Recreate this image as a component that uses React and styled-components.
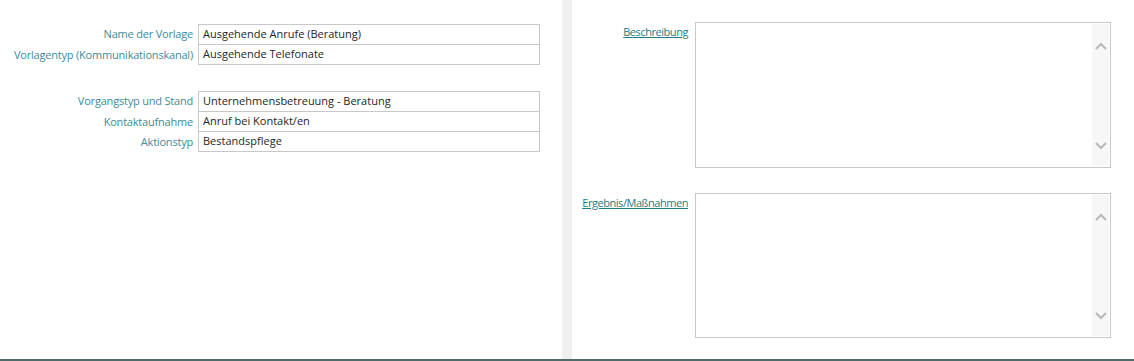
import React from "react";
import styled, { createGlobalStyle } from "styled-components";

const Global = createGlobalStyle`
  html, body { margin: 0; padding: 0; background: #fff; }
  body { font-family: "Segoe UI", "Open Sans", "Noto Sans", sans-serif; }
`;

const Page = styled.div`
  width: 1134px;
  height: 361px;
  box-sizing: border-box;
  border-bottom: 2px solid #4f6b6a;
  display: grid;
  grid-template-columns: 562px 10px 1fr;
`;

const LeftPanel = styled.div`
  padding-top: 24px;
  display: flex;
  flex-direction: column;
  gap: 26px;
`;

const Divider = styled.div`
  background: #f0f0f0;
`;

const RightPanel = styled.div`
  padding-top: 22px;
  display: flex;
  flex-direction: column;
  gap: 25px;
`;

const FieldGroup = styled.div`
  display: grid;
  grid-template-columns: 193px 342px;
  column-gap: 5px;
`;

const Label = styled.div`
  font-size: 11px;
  color: #3e8b99;
  text-align: right;
  line-height: 20px;
  white-space: nowrap;
  letter-spacing: -0.2px;
`;

const Value = styled.div`
  box-sizing: border-box;
  height: ${(p) => (p.$first ? 21 : 20)}px;
  border: 1px solid #c8c8c8;
  border-top-width: ${(p) => (p.$first ? 1 : 0)}px;
  padding: 0 4px;
  font-size: 11px;
  line-height: 18px;
  color: #262626;
  white-space: nowrap;
  overflow: hidden;
`;

const MemoRow = styled.div`
  display: grid;
  grid-template-columns: 116px 416px;
  column-gap: 7px;
`;

const LinkLabel = styled.a`
  font-size: 11px;
  color: #217c8a;
  text-decoration: underline;
  text-align: right;
  padding-top: 2px;
  line-height: 16px;
  white-space: nowrap;
  letter-spacing: -0.45px;
  cursor: pointer;
`;

const MemoBox = styled.div`
  box-sizing: border-box;
  height: ${(p) => p.$h}px;
  border: 1px solid #c8c8c8;
  display: flex;
  padding: 1px;
`;

const MemoText = styled.div`
  flex: 1;
`;

const Scroll = styled.div`
  width: 17px;
  background: #f7f7f7;
  display: flex;
  flex-direction: column;
  justify-content: space-between;
  align-items: center;
  padding: 18px 0 16px;
`;

const Chevron = ({ up }) => (
  <svg width="12" height="8" viewBox="0 0 12 8">
    <path
      d={up ? "M1 7 L6 2 L11 7" : "M1 1 L6 6 L11 1"}
      fill="none"
      stroke="#b8b8b8"
      strokeWidth="2"
    />
  </svg>
);

const fieldsA = [
  ["Name der Vorlage", "Ausgehende Anrufe (Beratung)"],
  ["Vorlagentyp (Kommunikationskanal)", "Ausgehende Telefonate"],
];
const fieldsB = [
  ["Vorgangstyp und Stand", "Unternehmensbetreuung - Beratung"],
  ["Kontaktaufnahme", "Anruf bei Kontakt/en"],
  ["Aktionstyp", "Bestandspflege"],
];

const Group = ({ rows }) => (
  <FieldGroup>
    {rows.map(([l, v], i) => (
      <React.Fragment key={l}>
        <Label>{l}</Label>
        <Value $first={i === 0}>{v}</Value>
      </React.Fragment>
    ))}
  </FieldGroup>
);

const Memo = ({ label, h }) => (
  <MemoRow>
    <LinkLabel>{label}</LinkLabel>
    <MemoBox $h={h}>
      <MemoText />
      <Scroll>
        <Chevron up />
        <Chevron />
      </Scroll>
    </MemoBox>
  </MemoRow>
);

export default function App() {
  return (
    <>
      <Global />
      <Page>
        <LeftPanel>
          <Group rows={fieldsA} />
          <Group rows={fieldsB} />
        </LeftPanel>
        <Divider />
        <RightPanel>
          <Memo label="Beschreibung" h={146} />
          <Memo label="Ergebnis/Maßnahmen" h={145} />
        </RightPanel>
      </Page>
    </>
  );
}
